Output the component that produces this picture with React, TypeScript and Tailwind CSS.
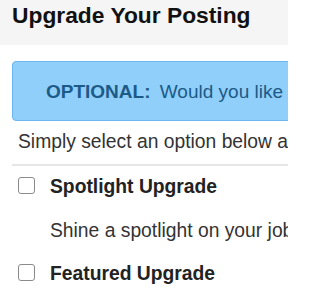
import React from "react";

function Box() {
  return (
    <span className="block w-[17px] h-[17px] shrink-0 rounded-[3px] border-[1.5px] border-[#8a8a8a] bg-white" />
  );
}

export default function App() {
  return (
    <div
      className="w-[288px] h-[288px] overflow-hidden bg-white"
      style={{ fontFamily: '"Liberation Sans", Arial, sans-serif' }}
    >
      <div className="h-[45px] bg-[#f5f5f5] pl-[12px] pt-[4px] whitespace-nowrap">
        <h1 className="text-[22.8px] leading-[23px] font-bold text-[#111]">Upgrade Your Posting</h1>
      </div>
      <div className="pl-[12px] pt-[16px]">
        <div className="h-[60px] w-[300px] rounded-[4px] border border-[#6cb8ee] bg-[#90cff9] pl-[33px] pt-[20px] whitespace-nowrap text-[#1c5a88] text-[19px] leading-[19px]">
          <span className="font-bold">OPTIONAL:</span>
          <span className="ml-[4px]"> Would you like to upgrade</span>
        </div>
        <p className="mt-[11px] pl-[6px] text-[19.3px] leading-[20px] text-[#333] whitespace-nowrap">
          Simply select an option below and click
        </p>
        <div className="mt-[12px] h-[2px] w-[290px] bg-[#e6e6e6]" />
        <div className="mt-[11px] pl-[6px] flex items-start gap-[15px] whitespace-nowrap">
          <Box />
          <span className="text-[19.3px] leading-[20px] font-bold text-[#222]">Spotlight Upgrade</span>
        </div>
        <p className="mt-[24px] pl-[38px] text-[19.3px] leading-[20px] text-[#333] whitespace-nowrap">
          Shine a spotlight on your job
        </p>
        <div className="mt-[23px] pl-[6px] flex items-start gap-[15px] whitespace-nowrap">
          <Box />
          <span className="text-[19.3px] leading-[20px] font-bold text-[#222]">Featured Upgrade</span>
        </div>
      </div>
    </div>
  );
}
